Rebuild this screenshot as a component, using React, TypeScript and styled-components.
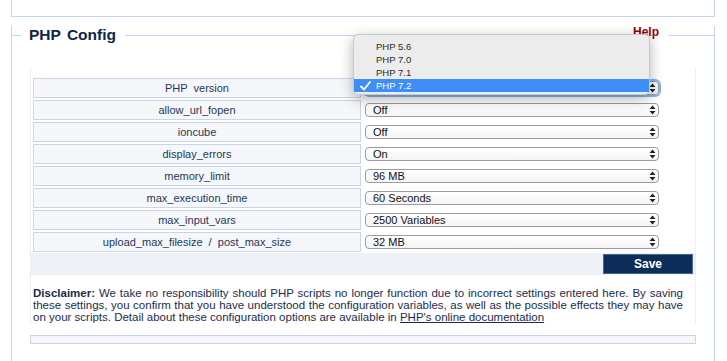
import React from 'react';
import styled, { createGlobalStyle } from 'styled-components';

const GlobalStyle = createGlobalStyle`
  html, body {
    margin: 0;
    padding: 0;
    background: #fff;
  }
  body {
    font-family: "Liberation Sans", Arial, Helvetica, sans-serif;
    width: 727px;
    height: 361px;
    overflow: hidden;
  }
  * {
    box-sizing: border-box;
  }
`;

const Page = styled.div`
  padding: 0 12px 0 11px;
`;

const TopBox = styled.div`
  height: 17px;
  border: 1px solid #c6d5ee;
  border-top: none;
`;

const Panel = styled.section`
  margin-top: 18px;
  border-left: 1px solid #c6d5ee;
  border-right: 1px solid #c6d5ee;
  padding: 0 18px;
  height: 340px;
`;

const Header = styled.div`
  display: flex;
  align-items: center;
  height: 19px;
  margin: -9px -18px 0;
`;

const HeaderLine = styled.div<{ $width?: number }>`
  height: 1px;
  background: #c6d5ee;
  flex: ${(p) => (p.$width ? `0 0 ${p.$width}px` : '1 1 auto')};
`;

const Legend = styled.h2`
  margin: 0;
  padding: 0 9px 0 8px;
  font-size: 15.5px;
  word-spacing: 2px;
  line-height: 19px;
  font-weight: bold;
  color: #0d2649;
  position: relative;
  top: -1px;
`;

const HelpLink = styled.a`
  align-self: flex-start;
  padding: 0 9px 0 6px;
  font-size: 12px;
  line-height: 13px;
  font-weight: bold;
  color: #990000;
  text-decoration: none;
`;

const Inner = styled.div`
  margin-top: 23px;
  border-left: 1px solid #eceef1;
  border-right: 1px solid #eceef1;
  padding: 10px 0 1px;
`;

const Rows = styled.div`
  display: flex;
  flex-direction: column;
  gap: 2px;
  padding-left: 2px;
`;

const Row = styled.div`
  display: grid;
  grid-template-columns: 328px 1fr;
  column-gap: 2px;
  height: 20px;
`;

const LabelCell = styled.div`
  border: 1px solid #c8d6e7;
  background: #f5f7fa;
  display: flex;
  align-items: center;
  justify-content: center;
  font-size: 11px;
  color: #1e3759;
  white-space: pre;
`;

const SelectCell = styled.div`
  position: relative;
  display: flex;
  align-items: center;
  padding-left: 2px;
`;

const SelectBox = styled.div<{ $focused?: boolean }>`
  width: 294px;
  height: 14px;
  border: 1px solid #9c9c9c;
  border-radius: 4px;
  background: linear-gradient(#ffffff, #f4f4f4);
  display: flex;
  align-items: center;
  justify-content: space-between;
  padding: 0 2px 0 7px;
  font-size: 11px;
  color: #111;
  box-shadow: ${(p) => (p.$focused ? '0 0 0 2px #86b4f4' : 'none')};
`;

const Popup = styled.div`
  position: absolute;
  left: -10px;
  top: -44px;
  width: 297px;
  height: 61px;
  padding: 5px 0 4px;
  background: #ececec;
  border: 1px solid #c9c9c9;
  border-radius: 5px;
  box-shadow: 0 4px 14px rgba(0, 0, 0, 0.3);
  z-index: 5;
`;

const PopupItem = styled.div<{ $selected?: boolean }>`
  position: relative;
  height: 13px;
  display: flex;
  align-items: center;
  padding-left: 22px;
  font-size: 9.5px;
  color: ${(p) => (p.$selected ? '#fff' : '#2a2a2a')};
  background: ${(p) => (p.$selected ? '#3e8ef7' : 'transparent')};
`;

const Check = styled.svg`
  position: absolute;
  left: 6px;
  top: 2px;
`;

const Band = styled.div`
  margin-top: 1px;
  height: 22px;
  background: #eef1f5;
  display: flex;
  justify-content: flex-end;
  align-items: center;
  padding-right: 2px;
`;

const SaveButton = styled.button`
  width: 90px;
  height: 20px;
  padding: 0;
  background: #0c2d57;
  border: 1px solid #4b678a;
  color: #fff;
  font-family: inherit;
  font-size: 12px;
  font-weight: bold;
`;

const Disclaimer = styled.p`
  margin: 12px 0 0;
  padding: 0 12px 0 2px;
  font-size: 11.5px;
  line-height: 12px;
  text-align: justify;
  color: #1b2c4c;

  a {
    color: #1b2c4c;
    text-decoration: underline;
  }
`;

const BottomBar = styled.div`
  margin-top: 11px;
  height: 9px;
  border: 1px solid #c9d5e6;
  background: #f4f6f9;
`;

const Arrows = () => (
  <svg width="7" height="10" viewBox="0 0 7 10">
    <path d="M0.5 4 L3.5 0.5 L6.5 4 Z" fill="#222" />
    <path d="M0.5 6 L3.5 9.5 L6.5 6 Z" fill="#222" />
  </svg>
);

const settings = [
  { label: 'PHP  version', value: 'PHP 7.2' },
  { label: 'allow_url_fopen', value: 'Off' },
  { label: 'ioncube', value: 'Off' },
  { label: 'display_errors', value: 'On' },
  { label: 'memory_limit', value: '96 MB' },
  { label: 'max_execution_time', value: '60 Seconds' },
  { label: 'max_input_vars', value: '2500 Variables' },
  { label: 'upload_max_filesize  /  post_max_size', value: '32 MB' },
];

const versions = ['PHP 5.6', 'PHP 7.0', 'PHP 7.1', 'PHP 7.2'];

export default function App() {
  return (
    <>
      <GlobalStyle />
      <Page>
        <TopBox />
        <Panel>
          <Header>
            <HeaderLine $width={9} />
            <Legend>PHP Config</Legend>
            <HeaderLine />
            <HelpLink href="#">Help</HelpLink>
            <HeaderLine $width={46} />
          </Header>
          <Inner>
            <Rows>
              {settings.map((s, i) => (
                <Row key={s.label}>
                  <LabelCell>{s.label}</LabelCell>
                  <SelectCell>
                    <SelectBox $focused={i === 0}>
                      <span>{s.value}</span>
                      <Arrows />
                    </SelectBox>
                    {i === 0 && (
                      <Popup>
                        {versions.map((v) => (
                          <PopupItem key={v} $selected={v === 'PHP 7.2'}>
                            {v === 'PHP 7.2' && (
                              <Check width="11" height="10" viewBox="0 0 11 10">
                                <path
                                  d="M1 5.5 L4 8.5 L10 1"
                                  fill="none"
                                  stroke="#fff"
                                  strokeWidth="1.8"
                                  strokeLinecap="round"
                                  strokeLinejoin="round"
                                />
                              </Check>
                            )}
                            {v}
                          </PopupItem>
                        ))}
                      </Popup>
                    )}
                  </SelectCell>
                </Row>
              ))}
            </Rows>
            <Band>
              <SaveButton>Save</SaveButton>
            </Band>
            <Disclaimer>
              <b>Disclaimer:</b> We take no responsibility should PHP scripts no longer function due
              to incorrect settings entered here. By saving these settings, you confirm that you have
              understood the configuration variables, as well as the possible effects they may have
              on your scripts. Detail about these configuration options are available in{' '}
              <a href="#">PHP's online documentation</a>
            </Disclaimer>
          </Inner>
          <BottomBar />
        </Panel>
      </Page>
    </>
  );
}
